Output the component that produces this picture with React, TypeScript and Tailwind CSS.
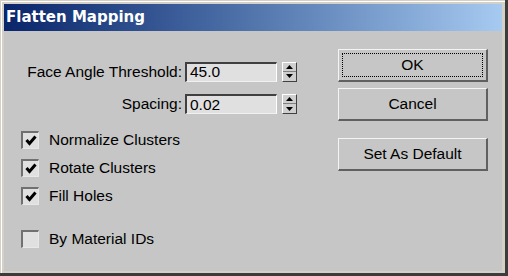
import React from "react";

const Spinner: React.FC = () => (
  <div className="ml-[5px] flex h-[20px] w-[15px] flex-col border-t border-l border-t-white border-l-white border-r border-b border-r-[#404040] border-b-[#404040] bg-[#cfcfcf]">
    <div className="flex flex-1 items-center justify-center border-b border-b-[#808080]">
      <svg width="7" height="4" viewBox="0 0 7 4">
        <path d="M3.5 0 L7 4 L0 4 Z" fill="#000" />
      </svg>
    </div>
    <div className="flex flex-1 items-center justify-center">
      <svg width="7" height="4" viewBox="0 0 7 4">
        <path d="M0 0 L7 0 L3.5 4 Z" fill="#000" />
      </svg>
    </div>
  </div>
);

const NumberRow: React.FC<{ label: string; value: string }> = ({
  label,
  value,
}) => (
  <div className="flex items-center">
    <div className="w-[178px] text-right">{label}</div>
    <div className="ml-[3px] flex h-[20px] w-[92px] items-center border-t-2 border-l-2 border-t-[#404040] border-l-[#404040] border-r border-b border-r-white border-b-[#f0f0f0] bg-[#e0e0e0] pl-[3px] leading-none">
      {value}
    </div>
    <Spinner />
  </div>
);

const CheckRow: React.FC<{ label: string; checked: boolean }> = ({
  label,
  checked,
}) => (
  <div className="flex h-[20px] items-center">
    <div className="ml-[17px] flex h-[18px] w-[18px] items-center justify-center border-t-2 border-l-2 border-t-[#707070] border-l-[#707070] border-r border-b border-r-[#e8e8e8] border-b-[#e8e8e8] bg-[#e0e0e0]">
      {checked && (
        <svg width="12" height="11" viewBox="0 0 12 11">
          <path
            d="M1.5 5 L4.5 8.5 L10.5 1.5"
            fill="none"
            stroke="#000"
            strokeWidth="3"
          />
        </svg>
      )}
    </div>
    <span className="ml-[10px]">{label}</span>
  </div>
);

const Button: React.FC<{ label: string; focused?: boolean; className?: string }> = ({
  label,
  focused,
  className,
}) => (
  <div
    className={`relative flex h-[33px] w-[150px] items-center justify-center border-t border-l border-t-[#f4f4f4] border-l-[#f4f4f4] border-r-2 border-b-2 border-r-[#606060] border-b-[#606060] bg-[#c6c6c6] ${className ?? ""}`}
  >
    {focused && (
      <div className="absolute inset-[3px] border border-dotted border-black" />
    )}
    <span>{label}</span>
  </div>
);

export default function App() {
  return (
    <div className="h-[276px] w-[508px] overflow-hidden bg-[#3c3c3c]">
      <div className="flex h-[273px] w-[505px] flex-col border-t border-l border-t-[#d4d0c8] border-l-[#d4d0c8] bg-[#d4d0c8]">
        <div className="flex h-full flex-col border-t border-l border-t-white border-l-white pt-[2px] pl-[2px] pr-[3px] pb-[2px]">
          <div className="flex h-[27px] items-center bg-gradient-to-r from-[#0a246a] to-[#a6caf0] pl-[2px] font-['DejaVu_Sans',sans-serif] text-[15px] font-bold text-white">
            Flatten Mapping
          </div>
          <div className="flex flex-1 bg-[#c6c6c6] font-['Liberation_Sans',Arial,sans-serif] text-[15.5px] text-black">
            <div className="flex w-[334px] flex-col">
              <div className="mt-[29px] flex flex-col gap-[9px]">
                <NumberRow label="Face Angle Threshold:" value="45.0" />
                <NumberRow label="Spacing:" value="0.02" />
              </div>
              <div className="mt-[14px] flex flex-col gap-[8px]">
                <CheckRow label="Normalize Clusters" checked />
                <CheckRow label="Rotate Clusters" checked />
                <CheckRow label="Fill Holes" checked />
              </div>
              <div className="mt-[23px]">
                <CheckRow label="By Material IDs" checked={false} />
              </div>
            </div>
            <div className="flex flex-col pt-[18px]">
              <Button label="OK" focused />
              <Button label="Cancel" className="mt-[6px]" />
              <Button label="Set As Default" className="mt-[17px]" />
            </div>
          </div>
        </div>
      </div>
    </div>
  );
}
